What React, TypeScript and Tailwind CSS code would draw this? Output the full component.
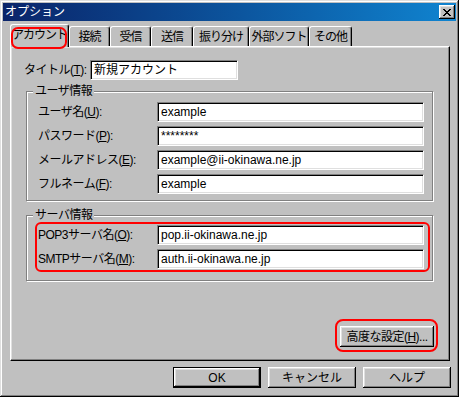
const raised =
  "shadow-[inset_-1px_-1px_#000,inset_1px_1px_#fff,inset_-2px_-2px_#808080,inset_2px_2px_#dfdfdf]";

const Field = ({ value, w = "w-[267px]" }: { value: string; w?: string }) => (
  <div
    className={`${w} h-[20px] bg-white border border-t-[#808080] border-l-[#808080] border-r-white border-b-white shadow-[inset_1px_1px_#000,inset_-1px_-1px_#dfdfdf] pl-[3px] flex items-center text-[12px] text-black leading-none whitespace-nowrap overflow-hidden`}
  >
    {value}
  </div>
);

const Row = ({ label, value }: { label: React.ReactNode; value: string }) => (
  <div className="flex items-center h-[20px]">
    <div className="w-[119px] tracking-[-0.5px]">{label}</div>
    <Field value={value} />
  </div>
);

const Group = ({
  title,
  h,
  children,
}: {
  title: string;
  h: string;
  children: React.ReactNode;
}) => (
  <div
    className={`relative ml-[2px] w-[407px] ${h} border border-[#808080] shadow-[inset_1px_1px_#fff,1px_1px_#fff] pl-[11px] flex flex-col gap-[4px]`}
  >
    <span className="absolute -top-[8px] left-[6px] px-[2px] bg-[#c0c0c0] leading-[14px] tracking-[-0.5px]">{title}</span>
    {children}
  </div>
);

const tabs = ["接続", "受信", "送信", "振り分け", "外部ソフト", "その他"];
const tabW = ["w-[41px]", "w-[41px]", "w-[42px]", "w-[56px]", "w-[60px]", "w-[43px]"];

export default function App() {
  return (
    <div className="relative w-[459px] h-[397px] bg-[#c0c0c0] p-[3px] shadow-[inset_-1px_-1px_#000,inset_1px_1px_#dfdfdf,inset_-2px_-2px_#808080,inset_2px_2px_#fff] font-['Liberation_Sans','Noto_Sans_CJK_JP',sans-serif] text-[12px] text-black leading-none whitespace-nowrap flex flex-col">
      {/* Title bar */}
      <div className="h-[18px] bg-linear-to-r from-[#0a246a] to-[#1084d0] flex items-center justify-between pl-[2px] pr-[1px]">
        <span className="text-white">オプション</span>
        <div className={`w-[16px] h-[14px] bg-[#c0c0c0] ${raised} flex items-center justify-center`}>
          <svg width="8" height="7" viewBox="0 0 8 7">
            <path d="M0 0h2v1H0zM6 0h2v1H6zM1 1h2v1H1zM5 1h2v1H5zM2 2h4v1H2zM3 3h2v1H3zM2 4h4v1H2zM1 5h2v1H1zM5 5h2v1H5zM0 6h2v1H0zM6 6h2v1H6z" fill="#000" />
          </svg>
        </div>
      </div>

      {/* Tabs */}
      <div className="ml-[7px] mt-[3px] h-[22px] flex items-end tracking-[-1px]">
        <div className="relative z-10 w-[59px] h-[23px] -mb-px bg-[#c0c0c0] border-t border-l border-white border-r border-r-black rounded-t-[3px] shadow-[inset_-1px_0_#808080] flex items-center justify-center pb-[3px]">
          アカウント
        </div>
        {tabs.map((t, i) => (
          <div
            key={t}
            className={`${tabW[i]} h-[20px] border-t border-l border-white border-r border-r-black rounded-t-[3px] shadow-[inset_-1px_0_#808080] flex items-center justify-center pt-[1px]`}
          >
            {t}
          </div>
        ))}
      </div>

      {/* Panel */}
      <div className="ml-[7px] w-[440px] h-[315px] border border-t-white border-l-white border-r-black border-b-black shadow-[inset_-1px_-1px_#808080,inset_1px_1px_#dfdfdf] pl-[13px] pt-[13px] flex flex-col">
        <div className="flex items-center h-[20px]">
          <div className="w-[66px] tracking-[-0.5px]">
            タイトル(<u>T</u>):
          </div>
          <Field value="新規アカウント" w="w-[148px]" />
        </div>

        <div className="mt-[11px]">
          <Group title="ユーザ情報" h="h-[110px] pt-[10px]">
            <Row label={<>ユーザ名(<u>U</u>):</>} value="example" />
            <Row label={<>パスワード(<u>P</u>):</>} value="********" />
            <Row label={<>メールアドレス(<u>E</u>):</>} value="example@ii-okinawa.ne.jp" />
            <Row label={<>フルネーム(<u>F</u>):</>} value="example" />
          </Group>
        </div>

        <div className="mt-[14px]">
          <Group title="サーバ情報" h="h-[66px] pt-[9px]">
            <Row label={<>POP3サーバ名(<u>O</u>):</>} value="pop.ii-okinawa.ne.jp" />
            <Row label={<>SMTPサーバ名(<u>M</u>):</>} value="auth.ii-okinawa.ne.jp" />
          </Group>
        </div>

        <div className={`mt-auto self-end mb-[13px] mr-[15px] w-[94px] h-[21px] ${raised} flex items-center justify-center tracking-[-0.5px]`}>
          高度な設定(<u>H</u>)...
        </div>
      </div>

      {/* Bottom buttons */}
      <div className="mt-[6px] flex justify-end gap-[7px] pr-[5px]">
        <div className={`w-[88px] h-[21px] border border-black ${raised} flex items-center justify-center`}>OK</div>
        <div className={`w-[88px] h-[21px] ${raised} flex items-center justify-center`}>キャンセル</div>
        <div className={`w-[88px] h-[21px] ${raised} flex items-center justify-center`}>ヘルプ</div>
      </div>

      {/* Red annotations */}
      <div className="absolute left-[11px] top-[27px] w-[56px] h-[22px] border-2 border-[#ff0000] rounded-[7px] z-20" />
      <div className="absolute left-[35px] top-[222px] w-[395px] h-[50px] border-2 border-[#ff0000] rounded-[6px] z-20" />
      <div className="absolute left-[335px] top-[319px] w-[103px] h-[33px] border-2 border-[#ff0000] rounded-[8px] z-20" />
    </div>
  );
}
